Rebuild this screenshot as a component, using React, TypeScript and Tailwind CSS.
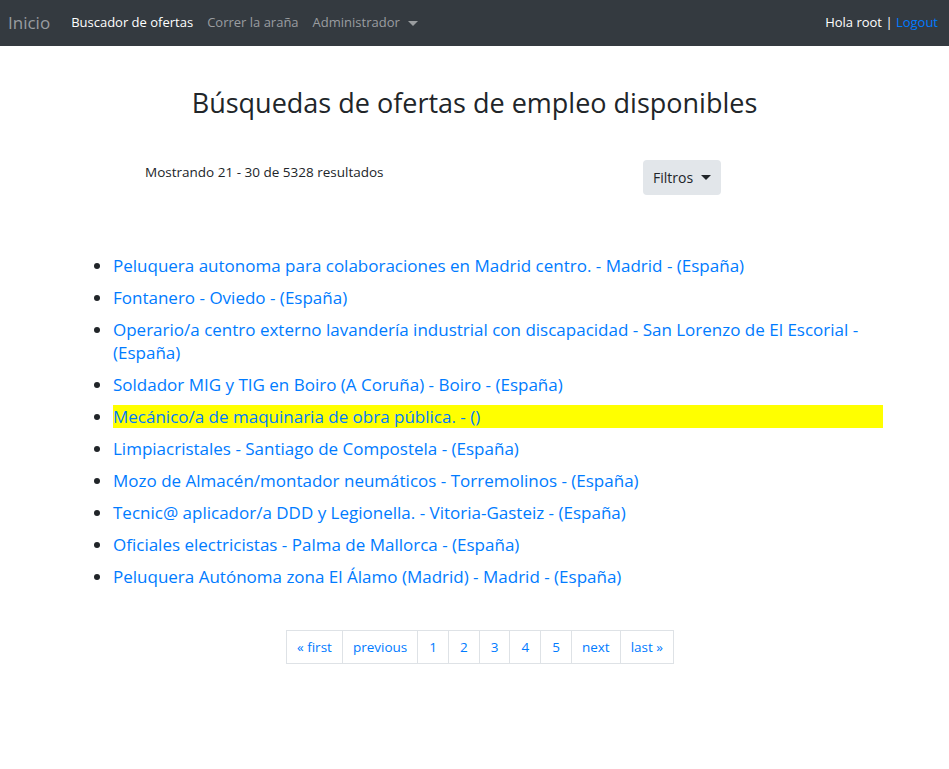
const offers = [
  "Peluquera autonoma para colaboraciones en Madrid centro. - Madrid - (España)",
  "Fontanero - Oviedo - (España)",
  "Operario/a centro externo lavandería industrial con discapacidad - San Lorenzo de El Escorial - (España)",
  "Soldador MIG y TIG en Boiro (A Coruña) - Boiro - (España)",
  "Mecánico/a de maquinaria de obra pública. - ()",
  "Limpiacristales - Santiago de Compostela - (España)",
  "Mozo de Almacén/montador neumáticos - Torremolinos - (España)",
  "Tecnic@ aplicador/a DDD y Legionella. - Vitoria-Gasteiz - (España)",
  "Oficiales electricistas - Palma de Mallorca - (España)",
  "Peluquera Autónoma zona El Álamo (Madrid) - Madrid - (España)",
];

const pages = ["« first", "previous", "1", "2", "3", "4", "5", "next", "last »"];

function Caret() {
  return <span className="inline-block ml-2 align-middle border-t-[5px] border-x-[5px] border-x-transparent border-t-current" />;
}

function Navbar() {
  return (
    <nav className="h-[46px] bg-[#343a40] flex items-center px-2 text-[13px]">
      <a href="#" className="text-[17px] text-[#9a9da0] mr-[14px]">Inicio</a>
      <a href="#" className="text-white px-[7px]">Buscador de ofertas</a>
      <a href="#" className="text-[#9a9da0] px-[7px]">Correr la araña</a>
      <a href="#" className="text-[#9a9da0] px-[7px] flex items-center">Administrador<Caret /></a>
      <div className="ml-auto mr-[3px] text-white">
        Hola root | <a href="#" className="text-[#007bff]">Logout</a>
      </div>
    </nav>
  );
}

export default function App() {
  return (
    <div className="min-h-[769px] bg-white text-[#212529]" style={{ fontFamily: '"Open Sans", sans-serif' }}>
      <Navbar />
      <h2 className="text-center text-[27px] mt-[40px] leading-[34px]">Búsquedas de ofertas de empleo disponibles</h2>
      <div className="flex items-start mt-[40px] pl-[145px]">
        <p className="text-[13.5px] mt-[2px] w-[498px]">Mostrando 21 - 30 de 5328 resultados</p>
        <button className="bg-[#e2e6ea] rounded text-[14px] h-[35px] px-[10px] flex items-center">
          Filtros<Caret />
        </button>
      </div>
      <ul className="mt-[59px] ml-[113px] w-[770px] list-disc text-[17px] leading-[23px]">
        {offers.map((o, i) => (
          <li key={i} className={i === 4 ? "mb-[9px] bg-[#ffff00]" : "mb-[9px]"}>
            <a href="#" className="text-[#007bff]">{o}</a>
          </li>
        ))}
      </ul>
      <div className="flex justify-center mt-[42px] pl-[12px]">
        <div className="flex text-[13.5px] text-[#007bff]">
          {pages.map((p, i) => (
            <a
              key={i}
              href="#"
              className={p.length === 1 ? "h-[34px] px-[11px] flex items-center border border-[#dee2e6] -ml-px" : "h-[34px] px-[10px] flex items-center border border-[#dee2e6] -ml-px"}
            >
              {p}
            </a>
          ))}
        </div>
      </div>
    </div>
  );
}
